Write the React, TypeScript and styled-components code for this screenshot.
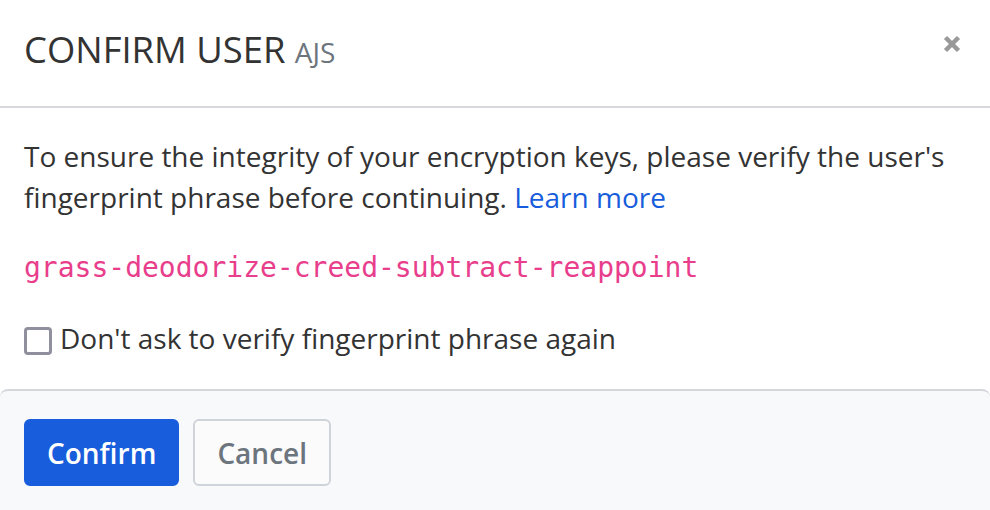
import styled, { createGlobalStyle } from 'styled-components';

const GlobalStyle = createGlobalStyle`
    body {
        margin: 0;
        background: #ffffff;
        font-family: 'Open Sans', 'Liberation Sans', sans-serif;
        color: #333333;
    }
`;

const Dialog = styled.div`
    width: 990px;
    height: 510px;
    display: flex;
    flex-direction: column;
    background: #ffffff;
    overflow: hidden;
`;

const Header = styled.header`
    height: 100px;
    flex-shrink: 0;
    display: flex;
    align-items: center;
    justify-content: space-between;
    padding: 0 29px 6px 24px;
    border-bottom: 2px solid #d6d8dc;
`;

const Title = styled.h1`
    margin: 0;
    font-size: 36.4px;
    line-height: 36px;
    font-weight: 400;
    color: #333333;
`;

const Muted = styled.small`
    font-size: 28px;
    color: #6c757d;
`;

const CloseButton = styled.button`
    align-self: flex-start;
    margin-top: 35px;
    border: none;
    background: none;
    padding: 0;
    width: 18px;
    height: 18px;
    display: flex;
    cursor: pointer;
`;

const Body = styled.div`
    padding: 28px 24px 30px;
`;

const Text = styled.p`
    margin: 0;
    font-size: 28px;
    line-height: 41px;
`;

const Link = styled.a`
    color: #175ddc;
    text-decoration: none;
`;

const Phrase = styled.code`
    display: block;
    margin: 29px 0;
    font-family: 'DejaVu Sans Mono', 'Liberation Mono', monospace;
    font-size: 28px;
    line-height: 42px;
    color: #e83e8c;
`;

const CheckRow = styled.label`
    display: flex;
    align-items: center;
    gap: 8px;
    font-size: 28px;
    line-height: 41px;
`;

const Box = styled.span`
    width: 28px;
    height: 28px;
    margin-top: 4px;
    box-sizing: border-box;
    border: 3px solid #8f8f9d;
    border-radius: 4px;
    background: #ffffff;
`;

const Footer = styled.footer`
    flex: 1;
    display: flex;
    align-items: flex-start;
    gap: 14px;
    padding: 28px 24px 0;
    background: #f8f9fa;
    border-top: 2px solid #d3d6db;
    border-radius: 8px 8px 0 0;
`;

const Button = styled.button<{ primary?: boolean }>`
    height: 67px;
    box-sizing: border-box;
    padding: 0 ${(props) => (props.primary ? 21 : 22)}px;
    font-family: 'Open Sans', 'Liberation Sans', sans-serif;
    font-size: 28px;
    font-weight: 600;
    border-radius: 6px;
    border: 2px solid ${(props) => (props.primary ? '#175ddc' : '#ced4da')};
    background: ${(props) => (props.primary ? '#175ddc' : '#fbfbfb')};
    color: ${(props) => (props.primary ? '#ffffff' : '#6c757d')};
    cursor: pointer;
`;

export default function App() {
    return (
        <Dialog>
            <GlobalStyle />
            <Header>
                <Title>
                    CONFIRM USER <Muted>AJS</Muted>
                </Title>
                <CloseButton aria-label="Close">
                    <svg width="18" height="18" viewBox="0 0 18 18">
                        <path d="M2.5 2.5 L15.5 15.5 M15.5 2.5 L2.5 15.5" stroke="#999999" strokeWidth="4.5" />
                    </svg>
                </CloseButton>
            </Header>
            <Body>
                <Text>
                    To ensure the integrity of your encryption keys, please verify the user's fingerprint phrase before
                    continuing. <Link href="#">Learn more</Link>
                </Text>
                <Phrase>grass-deodorize-creed-subtract-reappoint</Phrase>
                <CheckRow>
                    <Box />
                    Don't ask to verify fingerprint phrase again
                </CheckRow>
            </Body>
            <Footer>
                <Button primary>Confirm</Button>
                <Button>Cancel</Button>
            </Footer>
        </Dialog>
    );
}
